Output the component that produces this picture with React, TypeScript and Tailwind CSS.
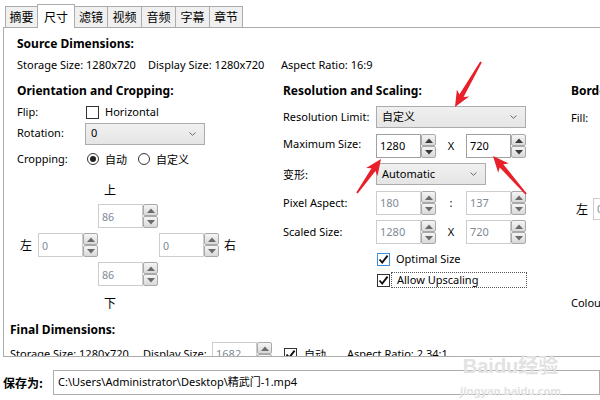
import React from "react";

const tabs = [
  { label: "摘要", w: "w-[33px]" },
  { label: "尺寸", w: "w-[38px]", active: true },
  { label: "滤镜", w: "w-[34px]" },
  { label: "视频", w: "w-[35px]" },
  { label: "音频", w: "w-[35px]" },
  { label: "字幕", w: "w-[35px]" },
  { label: "章节", w: "w-[34px]" },
];

function Tri({ up, disabled }: { up?: boolean; disabled?: boolean }) {
  return (
    <svg width="8" height="5" viewBox="0 0 8 5">
      <polygon
        points={up ? "0,5 4,0.5 8,5" : "0,0 4,4.5 8,0"}
        fill={disabled ? "#6b6b6b" : "#3a3a3a"}
      />
    </svg>
  );
}

function SpinBtn({ up, disabled }: { up?: boolean; disabled?: boolean }) {
  return (
    <div className="grid h-[12px] w-[15px] place-items-center rounded-[2px] border border-[#a9a9a9] bg-linear-to-b from-[#f5f5f5] to-[#d9d9d9]">
      <Tri up={up} disabled={disabled} />
    </div>
  );
}

function Spinner({ value, disabled = false }: { value: string; disabled?: boolean }) {
  return (
    <div className="flex h-[24px] w-[60px] shrink-0">
      <div
        className={`flex h-full w-[45px] items-center border px-[3px] text-[11px] ${
          disabled ? "border-[#cdcdcd] text-[#7f8a97]" : "border-[#a0a0a0] text-black"
        }`}
      >
        {value}
      </div>
      <div className="flex w-[15px] flex-col">
        <SpinBtn up disabled={disabled} />
        <SpinBtn disabled={disabled} />
      </div>
    </div>
  );
}

function Select({ value, w }: { value: string; w: string }) {
  return (
    <div
      className={`flex h-[22px] ${w} items-center justify-between border border-[#acacac] bg-linear-to-b from-[#f0f0f0] to-[#e5e5e5] pr-[8px] pl-[5px]`}
    >
      <span className="text-[11px]">{value}</span>
      <svg width="7" height="4" viewBox="0 0 7 4">
        <path d="M0.5 0.5 L3.5 3.3 L6.5 0.5" fill="none" stroke="#6a6a6a" strokeWidth="1" />
      </svg>
    </div>
  );
}

function Checkbox({ checked = false, blue = false }: { checked?: boolean; blue?: boolean }) {
  return (
    <span
      className={`grid size-[13px] shrink-0 place-items-center border bg-white ${
        blue ? "border-[#3b8ee0]" : "border-[#333333]"
      }`}
    >
      {checked ? (
        <svg width="11" height="11" viewBox="0 0 11 11">
          <path d="M1.5 5.5 L4.2 8.6 L9.6 1.6" fill="none" stroke="#111" strokeWidth="1.9" />
        </svg>
      ) : null}
    </span>
  );
}

function Radio({ checked = false }: { checked?: boolean }) {
  return (
    <span className="grid size-[12px] shrink-0 place-items-center rounded-full border border-[#333333] bg-white">
      {checked ? <span className="size-[6px] rounded-full bg-[#222]" /> : null}
    </span>
  );
}

function Arrow({ x1, y1, x2, y2 }: { x1: number; y1: number; x2: number; y2: number }) {
  const dx = x2 - x1;
  const dy = y2 - y1;
  const len = Math.hypot(dx, dy);
  const ux = dx / len;
  const uy = dy / len;
  const nx = -uy;
  const ny = ux;
  const head = 16;
  const half = 7;
  const bx = x2 - ux * head;
  const by = y2 - uy * head;
  const p = (x: number, y: number) => `${x.toFixed(1)},${y.toFixed(1)}`;
  const pts = [
    p(x1 + nx * 0.9, y1 + ny * 0.9),
    p(bx + ux * 3 + nx * 2.4, by + uy * 3 + ny * 2.4),
    p(bx + nx * half, by + ny * half),
    p(x2, y2),
    p(bx - nx * half, by - ny * half),
    p(bx + ux * 3 - nx * 2.4, by + uy * 3 - ny * 2.4),
    p(x1 - nx * 0.9, y1 - ny * 0.9),
  ];
  return <polygon points={pts.join(" ")} fill="#e8202a" />;
}

export default function App() {
  return (
    <div className="relative h-[400px] w-[600px] overflow-hidden bg-white font-['Noto_Sans','Noto_Sans_CJK_SC',sans-serif] text-[11px] text-black">
      {/* tab strip */}
      <div className="flex h-[27px] items-end pl-[5px]">
        {tabs.map((t, i) =>
          t.active ? (
            <div
              key={t.label}
              className={`relative z-10 -mb-px -ml-px flex h-[24px] ${t.w} items-center justify-center border-x border-t border-[#acacac] bg-white text-[12px] font-['Noto_Sans_CJK_SC',sans-serif]`}
            >
              {t.label}
            </div>
          ) : (
            <div
              key={t.label}
              className={`flex h-[21px] ${t.w} ${i === 0 ? "" : "-ml-px"} items-center justify-center border-x border-t border-[#acacac] bg-[#f0f0f0] text-[12px] font-['Noto_Sans_CJK_SC',sans-serif]`}
            >
              {t.label}
            </div>
          ),
        )}
      </div>

      {/* panel */}
      <div className="ml-[3px] h-[330px] overflow-hidden border-y border-l border-[#acacac]">
        <div className="ml-[13px] pt-[8px] text-[12px] leading-[16px] font-bold">Source Dimensions:</div>
        <div className="mt-[5px] ml-[13px] flex h-[16px] items-center">
          <span className="w-[131px]">Storage Size: 1280x720</span>
          <span className="w-[133px]">Display Size: 1280x720</span>
          <span>Aspect Ratio: 16:9</span>
        </div>

        <div className="mt-[10px] ml-[13px] flex">
          {/* left column */}
          <div className="w-[266px] shrink-0">
            <div className="text-[12px] leading-[16px] font-bold">Orientation and Cropping:</div>
            <div className="mt-[3px] flex h-[20px] items-center">
              <span className="w-[69px]">Flip:</span>
              <Checkbox />
              <span className="ml-[6px]">Horizontal</span>
            </div>
            <div className="mt-px flex h-[21px] items-center">
              <span className="w-[68px]">Rotation:</span>
              <Select value="0" w="w-[120px]" />
            </div>
            <div className="mt-[5px] flex h-[20px] items-center">
              <span className="w-[70px]">Cropping:</span>
              <Radio checked />
              <span className="ml-[6px] w-[33px] font-['Noto_Sans_CJK_SC',sans-serif]">自动</span>
              <Radio />
              <span className="ml-[6px] font-['Noto_Sans_CJK_SC',sans-serif]">自定义</span>
            </div>

            <div className="font-['Noto_Sans_CJK_SC',sans-serif]">
              <div className="mt-[13px] flex h-[16px] items-center pl-[87px] text-[12px]">上</div>
              <div className="mt-[6px] pl-[81px]">
                <Spinner value="86" disabled />
              </div>
              <div className="mt-[5px] flex h-[24px] items-center">
                <span className="ml-[3px] w-[18px] text-[12px]">左</span>
                <Spinner value="0" disabled />
                <span className="w-[61px]" />
                <Spinner value="0" disabled />
                <span className="ml-[5px] text-[12px]">右</span>
              </div>
              <div className="mt-[5px] pl-[81px]">
                <Spinner value="86" disabled />
              </div>
              <div className="mt-[9px] flex h-[16px] items-center pl-[87px] text-[12px]">下</div>
            </div>
          </div>

          {/* middle column */}
          <div className="w-[288px] shrink-0">
            <div className="text-[12px] leading-[16px] font-bold">Resolution and Scaling:</div>
            <div className="mt-[7px] flex h-[22px] items-center">
              <span className="w-[93px]">Resolution Limit:</span>
              <Select value="自定义" w="w-[150px]" />
            </div>
            <div className="mt-[6px] flex h-[24px] items-center">
              <span className="w-[93px] self-start pt-[2px]">Maximum Size:</span>
              <Spinner value="1280" />
              <span className="w-[30px] text-center">X</span>
              <Spinner value="720" />
            </div>
            <div className="mt-[5px] flex h-[22px] items-center">
              <span className="w-[93px] font-['Noto_Sans_CJK_SC',sans-serif]">变形:</span>
              <Select value="Automatic" w="w-[110px]" />
            </div>
            <div className="mt-[6px] flex h-[24px] items-center">
              <span className="w-[93px]">Pixel Aspect:</span>
              <Spinner value="180" disabled />
              <span className="w-[30px] text-center">:</span>
              <Spinner value="137" disabled />
            </div>
            <div className="mt-[5px] flex h-[24px] items-center">
              <span className="w-[93px]">Scaled Size:</span>
              <Spinner value="1280" disabled />
              <span className="w-[30px] text-center">X</span>
              <Spinner value="720" disabled />
            </div>
            <div className="mt-[7px] flex h-[16px] items-center pl-[94px]">
              <Checkbox checked blue />
              <span className="ml-[6px]">Optimal Size</span>
            </div>
            <div className="mt-[5px] flex h-[16px] items-center pl-[94px]">
              <Checkbox checked />
              <span className="ml-px flex h-[16px] w-[136px] items-center border border-dotted border-[#555] pl-[5px]">
                Allow Upscaling
              </span>
            </div>
          </div>

          {/* right column (cut off at the window edge) */}
          <div className="shrink-0">
            <div className="text-[12px] leading-[16px] font-bold whitespace-nowrap">Borders:</div>
            <div className="mt-[11px] h-[16px]">Fill:</div>
            <div className="mt-[72px] flex h-[22px] items-center">
              <span className="ml-[5px] w-[17px] text-[12px] font-['Noto_Sans_CJK_SC',sans-serif]">左</span>
              <div className="flex h-full w-[44px] items-center border border-[#cdcdcd] px-[3px] text-[#7f8a97]">0</div>
            </div>
            <div className="mt-[75px] h-[16px] whitespace-nowrap">Colour:</div>
          </div>
        </div>

        <div className="mt-[11px] ml-[6px] text-[12px] leading-[16px] font-bold">Final Dimensions:</div>
        <div className="mt-[4px] ml-[6px] flex h-[24px] items-center">
          <span className="w-[133px]">Storage Size: 1280x720</span>
          <span className="w-[69px]">Display Size:</span>
          <Spinner value="1682" disabled />
          <span className="w-[12px]" />
          <Checkbox checked />
          <span className="ml-[7px] w-[43px] font-['Noto_Sans_CJK_SC',sans-serif]">自动</span>
          <span>Aspect Ratio: 2.34:1</span>
        </div>
      </div>

      {/* save as */}
      <div className="mt-[13px] flex h-[25px] items-center">
        <span className="w-[53px] pl-[3px] text-[12px] font-bold font-['Noto_Sans_CJK_SC',sans-serif]">保存为:</span>
        <div className="flex h-full flex-1 items-center border border-[#acacac] pl-[4px] font-['Noto_Sans','Noto_Sans_CJK_SC',sans-serif]">
          C:\Users\Administrator\Desktop\精武门-1.mp4
        </div>
      </div>

      {/* watermark */}
      <div className="pointer-events-none absolute top-[356px] left-[460px] flex flex-col items-center leading-none text-[#e2e2e2]">
        <span className="text-[20px] font-bold font-['Liberation_Sans','Noto_Sans_CJK_SC',sans-serif]">Baidu经验</span>
        <span className="mt-[9px] text-[11px] font-bold">jingyan.baidu.com</span>
      </div>

      {/* red annotation arrows */}
      <svg className="pointer-events-none absolute inset-0" width="600" height="400">
        <Arrow x1={481} y1={62} x2={455} y2={107} />
        <Arrow x1={357} y1={193} x2={381} y2={159} />
        <Arrow x1={526} y1={194} x2={493} y2={156} />
      </svg>
    </div>
  );
}
